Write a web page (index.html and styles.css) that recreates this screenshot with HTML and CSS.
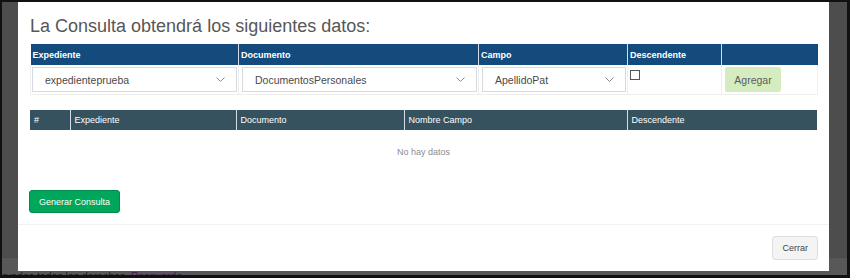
FILE: index.html
```html
<!DOCTYPE html>
<html lang="es">
<head>
    <meta charset="UTF-8">
    <meta name="viewport" content="width=device-width, initial-scale=1.0">
    <title>Nueva Consulta</title>
    <link rel="stylesheet" href="styles.css">
</head>
<body>

<div class="screen">
    <div class="page-footer">
        <span class="copyright">Reservados todos los derechos. <a href="#">Resguardo</a></span>
    </div>

    <!-- Modal de consulta -->
    <div class="modal">
        <div class="modal-body">
            <h3 class="modal-title">La Consulta obtendrá los siguientes datos:</h3>

            <table class="grid grid-add">
                <colgroup>
                    <col style="width: 208px">
                    <col style="width: 240px">
                    <col style="width: 149px">
                    <col style="width: 94px">
                    <col style="width: 96px">
                </colgroup>
                <thead>
                    <tr>
                        <th>Expediente</th>
                        <th>Documento</th>
                        <th>Campo</th>
                        <th>Descendente</th>
                        <th></th>
                    </tr>
                </thead>
                <tbody>
                    <tr>
                        <td>
                            <div class="select">
                                <span>expedienteprueba</span>
                                <svg class="caret" width="9" height="5" viewBox="0 0 9 5"><path d="M0.5 0.5 L4.5 4.5 L8.5 0.5" fill="none" stroke="#8a8a8a" stroke-width="1"/></svg>
                            </div>
                        </td>
                        <td>
                            <div class="select">
                                <span>DocumentosPersonales</span>
                                <svg class="caret" width="9" height="5" viewBox="0 0 9 5"><path d="M0.5 0.5 L4.5 4.5 L8.5 0.5" fill="none" stroke="#8a8a8a" stroke-width="1"/></svg>
                            </div>
                        </td>
                        <td>
                            <div class="select">
                                <span>ApellidoPat</span>
                                <svg class="caret" width="9" height="5" viewBox="0 0 9 5"><path d="M0.5 0.5 L4.5 4.5 L8.5 0.5" fill="none" stroke="#8a8a8a" stroke-width="1"/></svg>
                            </div>
                        </td>
                        <td><span class="checkbox"></span></td>
                        <td><button class="btn btn-add">Agregar</button></td>
                    </tr>
                </tbody>
            </table>

            <table class="grid grid-result">
                <colgroup>
                    <col style="width: 40px">
                    <col style="width: 166px">
                    <col style="width: 168px">
                    <col style="width: 223px">
                    <col style="width: 190px">
                </colgroup>
                <thead>
                    <tr>
                        <th>#</th>
                        <th>Expediente</th>
                        <th>Documento</th>
                        <th>Nombre Campo</th>
                        <th>Descendente</th>
                    </tr>
                </thead>
                <tbody>
                    <tr>
                        <td colspan="5" class="empty">No hay datos</td>
                    </tr>
                </tbody>
            </table>

            <button class="btn btn-success">Generar Consulta</button>
        </div>
        <div class="modal-footer">
            <button class="btn btn-default">Cerrar</button>
        </div>
    </div>
</div>

</body>
</html>
```

FILE: styles.css
```css
* {
    box-sizing: border-box;
}
body {
    margin: 0;
    font-family: "Liberation Sans", Arial, sans-serif;
    background-color: #111;
}
.screen {
    position: relative;
    width: 850px;
    height: 278px;
    border: 2px solid #111;
    border-right-width: 3px;
    border-bottom-width: 3px;
    background-color: #4d4d4d; /* backdrop */
    display: flex;
    flex-direction: column;
    justify-content: flex-end;
    overflow: hidden;
}
.page-footer {
    height: 18px;
    padding-top: 11px;
    background-color: #585858;
    border-top: 1px solid #4a4a4a;
    font-size: 10.5px;
    line-height: 14px;
    white-space: nowrap;
    overflow: hidden;
}
.copyright {
    display: block;
    margin-left: -24px;
    color: #1e1e1e;
}
.copyright a {
    color: #4b1458;
    text-decoration: none;
}

/* Modal */
.modal {
    position: absolute;
    left: 16px;
    top: 0;
    width: 811px;
    background-color: #fff;
}
.modal-body {
    padding: 14px 12px 11px 12px;
}
.modal-title {
    margin: 0 0 8px 0;
    font-size: 18px;
    line-height: 20px;
    font-weight: normal;
    color: #575757;
}
.modal-footer {
    border-top: 1px solid #f2f2f2;
    padding: 11px 11px;
    display: flex;
    justify-content: flex-end;
}

/* Tablas */
.grid {
    width: 787px;
    table-layout: fixed;
    border-collapse: collapse;
}
.grid th {
    height: 21px;
    padding: 0 2px;
    font-size: 9px;
    text-align: left;
    color: #fff;
    vertical-align: middle;
    white-space: nowrap;
}
.grid th + th {
    border-left: 1px solid #d4dde6;
}
.grid-add th {
    background-color: #124b7c; /* azul encabezado */
    font-weight: bold;
}
.grid-add td {
    padding: 2px 1px 2px 3px;
    border: 1px solid #eeeeee;
    border-top: none;
    vertical-align: top;
}
.grid-add td:first-child {
    padding-left: 1px;
}
.grid-result {
    margin-top: 15px;
}
.grid-result th {
    height: 20px;
    padding: 0 4px;
    background-color: #36525e;
    font-weight: normal;
}
.empty {
    padding: 16px 0;
    text-align: center;
    font-size: 9px;
    line-height: 12px;
    color: #8c8c8c;
}

/* Controles */
.select {
    height: 25px;
    display: flex;
    align-items: center;
    justify-content: space-between;
    padding: 0 11px 0 12px;
    border: 1px solid #d6dae1;
    font-size: 10.5px;
    color: #4a4a4a;
}
.caret {
    display: block;
}
.checkbox {
    display: block;
    width: 10px;
    height: 10px;
    margin: 3px 0 0 -1px;
    border: 1px solid #555;
    background-color: #fff;
}
.btn {
    font-family: "Liberation Sans", Arial, sans-serif;
    cursor: pointer;
    border-radius: 3px;
}
.btn-add {
    height: 25px;
    width: 56px;
    padding: 0;
    border: none;
    border-radius: 2px;
    background-color: #d5ecc0;
    color: #5b5b5b;
    font-size: 10.5px;
}
.btn-success {
    display: block;
    height: 23px;
    margin: 16px 0 0 -1px;
    padding: 0 9px;
    background-color: #00a65a;
    border: 1px solid #008d4c;
    color: #fff;
    font-size: 9px;
}
.btn-default {
    height: 24px;
    padding: 0 9px;
    background-color: #f4f4f4;
    border: 1px solid #dddddd;
    color: #444;
    font-size: 9px;
}
```
